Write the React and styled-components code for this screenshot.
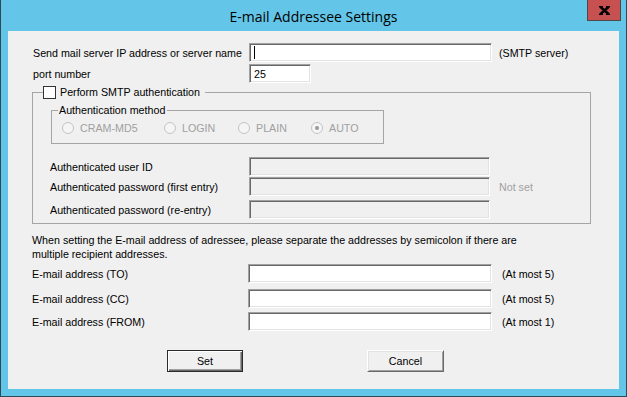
import styled, { createGlobalStyle } from 'styled-components';

const GlobalStyle = createGlobalStyle`
html, body {
    margin: 0;
    padding: 0;
}
body {
    font-family: "Liberation Sans", Arial, sans-serif;
    font-size: 10.7px;
    color: #000;
    background: #63c6e8;
}
`

const Window = styled.div`
width: 627px;
height: 397px;
box-sizing: border-box;
background: #63c6e8;
border: 1px solid #2e4a58;
border-top: none;
display: flex;
flex-direction: column;
`

const TitleBar = styled.div`
height: 31px;
flex: none;
display: grid;
grid-template-columns: 1fr auto 1fr;
align-items: start;
`

const Title = styled.div`
grid-column: 2;
margin-top: 7px;
font-family: "Open Sans", "Liberation Sans", sans-serif;
font-size: 14px;
line-height: 20px;
color: #000;
`

const CloseButton = styled.div`
grid-column: 3;
justify-self: end;
margin-right: 5px;
width: 34px;
height: 21px;
box-sizing: border-box;
background: #c75050;
border: 1px solid #4a4a4a;
border-top: none;
display: flex;
align-items: center;
justify-content: center;
`

const Client = styled.div`
flex: 1;
margin: 0 7px 7px;
background: #f0f0f0;
padding: 12px 0 0 24px;
display: flex;
flex-direction: column;
align-items: flex-start;
`

const Row = styled.div`
display: grid;
grid-template-columns: ${p => p.$label}px ${p => p.$field}px auto;
align-items: center;
height: 19px;
margin-top: ${p => p.$mt || 0}px;
white-space: nowrap;
`

const Label = styled.span`
padding-left: ${p => p.$indent || 0}px;
`

const Field = styled.div`
box-sizing: border-box;
height: 19px;
width: ${p => p.$w}px;
border: 1px solid;
border-color: #a0a0a0 #fff #fff #a0a0a0;
box-shadow: inset 1px 1px 0 #696969, inset -1px -1px 0 #e3e3e3;
background: ${p => (p.$disabled ? '#f0f0f0' : '#fff')};
padding-left: 4px;
display: flex;
align-items: center;
`

const Caret = styled.span`
width: 1px;
height: 13px;
background: #000;
`

const Hint = styled.span`
margin-left: ${p => p.$gap}px;
color: ${p => (p.$muted ? '#a0a0a0' : '#000')};
`

const Group = styled.fieldset`
margin: ${p => p.$mt || 0}px 0 0 ${p => p.$ml || 0}px;
padding: 0;
width: ${p => p.$w}px;
box-sizing: border-box;
min-width: 0;
border: 1px solid #a5a5a5;
`

const CheckLegend = styled.legend`
margin-left: 10px;
padding: 0 5px 0 0;
display: flex;
align-items: center;
gap: 4px;
height: 14px;
`

const CheckBox = styled.span`
width: 13px;
height: 13px;
box-sizing: border-box;
border: 1px solid #333;
background: #fff;
`

const TextLegend = styled.legend`
margin-left: 6px;
padding: 0 2px 0 1px;
line-height: 13px;
`

const GroupBody = styled.div`
padding: 5px 0 4px 17px;
display: flex;
flex-direction: column;
align-items: flex-start;
`

const RadioRow = styled.div`
padding: 2px 0 6px 10px;
display: grid;
grid-template-columns: 102px 74px 73px auto;
align-items: center;
height: 18px;
`

const Option = styled.div`
display: flex;
align-items: center;
gap: 6px;
color: #a0a0a0;
`

const RadioDot = styled.span`
width: 12px;
height: 12px;
box-sizing: border-box;
border-radius: 50%;
border: 1px solid #c4c4c4;
background: #f5f5f5;
display: flex;
align-items: center;
justify-content: center;
&::after {
    content: '';
    width: 4px;
    height: 4px;
    border-radius: 50%;
    background: ${p => (p.$checked ? '#999' : 'transparent')};
}
`

const Note = styled.p`
margin: 9px 0 0;
line-height: 14px;
white-space: nowrap;
`

const ButtonRow = styled.div`
display: flex;
gap: 124px;
margin-top: 19px;
padding-left: 135px;
`

const Button = styled.div`
width: ${p => p.$w}px;
height: 22px;
box-sizing: border-box;
background: #f0f0f0;
display: flex;
align-items: center;
justify-content: center;
border: 1px solid;
border-color: ${p => (p.$default ? '#2b2b2b' : '#fff #696969 #696969 #fff')};
box-shadow: ${p => (p.$default
        ? 'inset 1px 1px 0 #fff, inset -1px -1px 0 #696969, inset -2px -2px 0 #a0a0a0'
        : 'inset 1px 1px 0 #e3e3e3, inset -1px -1px 0 #a0a0a0')};
`

const CloseGlyph = () => (
    <svg width="11" height="9" viewBox="0 0 11 9">
        <path d="M1.5 1 L9.5 8 M9.5 1 L1.5 8" stroke="#000" strokeWidth="2.4" fill="none" />
        <path d="M0 0.8 H4 M7 0.8 H11 M0 8.2 H4 M7 8.2 H11" stroke="#000" strokeWidth="1.6" fill="none" />
    </svg>
)

const methods = [
    { name: 'CRAM-MD5' },
    { name: 'LOGIN' },
    { name: 'PLAIN' },
    { name: 'AUTO', checked: true },
]

const App = () => {
    return (
        <Window>
            <GlobalStyle />
            <TitleBar>
                <Title>E-mail Addressee Settings</Title>
                <CloseButton><CloseGlyph /></CloseButton>
            </TitleBar>
            <Client>
                <Row $label={217} $field={243}>
                    <Label $indent={1}>Send mail server IP address or server name</Label>
                    <Field $w={243}><Caret /></Field>
                    <Hint $gap={7}>(SMTP server)</Hint>
                </Row>
                <Row $label={217} $field={62} $mt={2}>
                    <Label $indent={1}>port number</Label>
                    <Field $w={62}>25</Field>
                </Row>

                <Group $w={559} $mt={2}>
                    <CheckLegend>
                        <CheckBox />
                        Perform SMTP authentication
                    </CheckLegend>
                    <GroupBody>
                        <Group $w={333} $ml={1}>
                            <TextLegend>Authentication method</TextLegend>
                            <RadioRow>
                                {methods.map(m => (
                                    <Option key={m.name}>
                                        <RadioDot $checked={m.checked} />
                                        {m.name}
                                    </Option>
                                ))}
                            </RadioRow>
                        </Group>
                        <Row $label={199} $field={241} $mt={13}>
                            <Label>Authenticated user ID</Label>
                            <Field $w={241} $disabled />
                        </Row>
                        <Row $label={199} $field={241} $mt={1}>
                            <Label>Authenticated password (first entry)</Label>
                            <Field $w={241} $disabled />
                            <Hint $gap={9} $muted>Not set</Hint>
                        </Row>
                        <Row $label={199} $field={241} $mt={4}>
                            <Label>Authenticated password (re-entry)</Label>
                            <Field $w={241} $disabled />
                        </Row>
                    </GroupBody>
                </Group>

                <Note>
                    When setting the E-mail address of adressee, please separate the addresses by semicolon if there are<br />
                    multiple recipient addresses.
                </Note>
                <Row $label={216} $field={244} $mt={3}>
                    <Label>E-mail address (TO)</Label>
                    <Field $w={244} />
                    <Hint $gap={10}>(At most 5)</Hint>
                </Row>
                <Row $label={216} $field={244} $mt={6}>
                    <Label>E-mail address (CC)</Label>
                    <Field $w={244} />
                    <Hint $gap={10}>(At most 5)</Hint>
                </Row>
                <Row $label={216} $field={244} $mt={4}>
                    <Label>E-mail address (FROM)</Label>
                    <Field $w={244} />
                    <Hint $gap={10}>(At most 1)</Hint>
                </Row>

                <ButtonRow>
                    <Button $w={76} $default>Set</Button>
                    <Button $w={77}>Cancel</Button>
                </ButtonRow>
            </Client>
        </Window>
    )
}

export default App
